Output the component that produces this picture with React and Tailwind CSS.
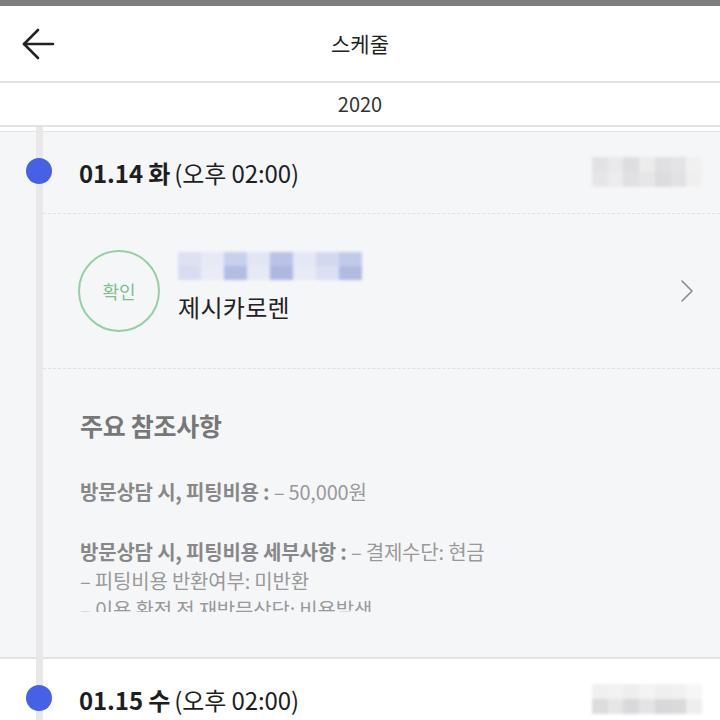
import React from "react";

const grayBlur = [
  "bg-[#e2e2e4]", "bg-[#e9e9eb]", "bg-[#dedee0]", "bg-[#ececed]", "bg-[#e0e0e2]", "bg-[#e4e4e6]", "bg-[#f0f0f1]",
  "bg-[#e6e6e8]", "bg-[#ececee]", "bg-[#e1e1e3]", "bg-[#e6e6e8]", "bg-[#dcdcde]", "bg-[#e2e2e4]", "bg-[#efeff0]",
];

const grayBlur2 = [
  "bg-[#f0f0f1]", "bg-[#f2f2f3]", "bg-[#eeeeef]", "bg-[#f3f3f4]", "bg-[#efeff0]", "bg-[#f1f1f2]", "bg-[#f6f6f7]",
  "bg-[#dcdcde]", "bg-[#e6e6e8]", "bg-[#d9d9db]", "bg-[#e4e4e6]", "bg-[#d8d8da]", "bg-[#dadadc]", "bg-[#eeeeef]",
];

const blueBlur = [
  "bg-[#dde1f2]", "bg-[#e6e9f6]", "bg-[#c9d0ec]", "bg-[#e2e5f4]", "bg-[#bac3e6]", "bg-[#e4e7f5]", "bg-[#d3d8ef]", "bg-[#c2cae9]",
  "bg-[#d8dcf0]", "bg-[#e9ebf6]", "bg-[#b3bde2]", "bg-[#e6e9f5]", "bg-[#aeb8df]", "bg-[#e8eaf6]", "bg-[#dbdff2]", "bg-[#b1bbe1]",
];

function Blur({ cells, cols, className }) {
  return (
    <div className={"grid blur-[1.5px] " + cols + " " + className}>
      {cells.map((c, i) => (
        <div key={i} className={c} />
      ))}
    </div>
  );
}

function DateRow({ date, day, blur }) {
  return (
    <div className="h-[81px] flex items-center pl-[26px] pr-[18px] relative z-10">
      <div className="w-[26px] h-[26px] rounded-full bg-[#4661e6] mt-[-3px]" />
      <div className="ml-[27px] text-[24px] text-[#1e1e1e] tracking-[-0.1px]">
        <span className="font-semibold">{date} {day}</span>
        <span className="ml-[4px]">(오후 02:00)</span>
      </div>
      <Blur cells={blur} cols="grid-cols-7" className="ml-auto w-[110px] h-[30px] mt-[-2px]" />
    </div>
  );
}

export default function App() {
  return (
    <div className="relative h-[720px] overflow-hidden bg-white font-['Noto_Sans_CJK_KR',sans-serif]">
      <div className="absolute left-[36px] top-[126px] bottom-0 w-[7px] bg-[#e8e8e9] z-0" />

      <div className="h-[6px] bg-[#7e7e7e]" />
      <div className="h-[77px] grid grid-cols-[80px_1fr_80px] items-center border-b-2 border-[#e3e3e3]">
        <svg width="36" height="36" viewBox="0 0 36 36" className="ml-[20px]" fill="none" stroke="#222" strokeWidth="2.6" strokeLinecap="round" strokeLinejoin="round">
          <path d="M33 18H4" />
          <path d="M18 4L4 18L18 32" />
        </svg>
        <div className="text-center text-[21px] text-[#222]">스케줄</div>
        <div />
      </div>
      <div className="h-[44px] flex items-center justify-center text-[20px] text-[#333] border-b-2 border-[#e3e3e3] bg-white relative z-10">
        2020
      </div>
      <div className="h-[4px]" />

      <div className="border-t border-[#e3e3e3] bg-[#f5f6f8]">
        <DateRow date="01.14" day="화" blur={grayBlur} />
        <div className="ml-[43px] border-t border-dashed border-[#e0e0e2]" />
        <div className="h-[154px] flex items-center pl-[78px] pr-[26px] relative z-10">
          <div className="w-[82px] h-[82px] rounded-full border-2 border-[#93d0a2] flex items-center justify-center text-[18px] text-[#7cc08e]">
            확인
          </div>
          <div className="ml-[18px] flex flex-col">
            <Blur cells={blueBlur} cols="grid-cols-8" className="w-[184px] h-[28px] mt-[-6px]" />
            <div className="mt-[9px] text-[24px] text-[#222] tracking-[0.3px]">제시카로렌</div>
          </div>
          <svg width="14" height="24" viewBox="0 0 14 24" className="ml-auto" fill="none" stroke="#8a8a8a" strokeWidth="1.6" strokeLinecap="round" strokeLinejoin="round">
            <path d="M2 2L12 12L2 22" />
          </svg>
        </div>
        <div className="ml-[43px] border-t border-dashed border-[#e0e0e2]" />
        <div className="h-[288px] pl-[80px] pt-[41px] relative z-10">
          <div className="h-[32px] flex items-center text-[25px] font-bold text-[#777] tracking-[-0.3px]">
            주요 참조사항
          </div>
          <div className="mt-[35px] h-[135px] overflow-hidden text-[20px] leading-[29px] text-[#999] tracking-[-0.2px]">
            <div>
              <span className="font-bold text-[#888]">방문상담 시, 피팅비용 : </span>– 50,000원
            </div>
            <div className="mt-[31px]">
              <span className="font-bold text-[#888]">방문상담 시, 피팅비용 세부사항 : </span>– 결제수단: 현금
            </div>
            <div>– 피팅비용 반환여부: 미반환</div>
            <div>– 이용 확정 전 재방문상담: 비용발생</div>
          </div>
        </div>
      </div>

      <div className="border-t-2 border-[#e3e3e3] bg-white">
        <DateRow date="01.15" day="수" blur={grayBlur2} />
      </div>
    </div>
  );
}
